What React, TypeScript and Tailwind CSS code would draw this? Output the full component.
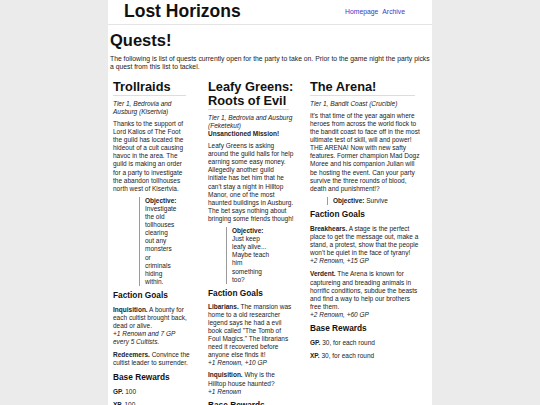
import React from "react";

const Heading = ({ children }: { children: React.ReactNode }) => (
  <h2 className="mr-[4px] border-b border-[#dddddd] pb-[1px] text-[12.8px] font-bold leading-[14px] text-[#111]">
    {children}
  </h2>
);

const SubHeading = ({ children }: { children: React.ReactNode }) => (
  <h3 className="mt-[5.5px] text-[8.3px] font-bold leading-[9.5px] text-[#111]">
    {children}
  </h3>
);

const P = ({ children, loose }: { children: React.ReactNode; loose?: boolean }) => (
  <p className={loose ? "mt-[5px]" : "mt-[4px]"}>{children}</p>
);

// joins pre-broken lines so each column wraps the same way at every zoom
const Lines = ({ lines }: { lines: string[] }) => (
  <>
    {lines.map((l, i) => (
      <React.Fragment key={i}>
        {i > 0 && <br />}
        {l}
      </React.Fragment>
    ))}
  </>
);

const Objective = ({
  className,
  children,
}: {
  className: string;
  children: React.ReactNode;
}) => (
  <blockquote className={"mt-[4px] border-l border-[#9a9a9a] pl-[5px] " + className}>
    <b>Objective:</b>
    {children}
  </blockquote>
);

const App = () => {
  return (
    <div className="min-h-screen bg-[#ebebeb] font-['Liberation_Sans',Arial,sans-serif] text-[#222]">
      <div className="mx-auto min-h-screen w-[324px] bg-white">
        <header className="flex h-[25px] items-center justify-between border-b border-[#e4e4e4] pl-[16px] pr-[27px]">
          <h1 className="text-[17.5px] font-bold leading-none text-[#111]">Lost Horizons</h1>
          <nav className="flex gap-[4px] text-[6.8px] text-[#3838cc]">
            <a href="#">Homepage</a>
            <a href="#">Archive</a>
          </nav>
        </header>

        <main className="px-[2px]">
          <h1 className="mt-[6px] text-[16.5px] font-bold leading-[19px] text-[#111]">Quests!</h1>
          <p className="mt-[5px] text-[6.8px] leading-[8.4px]">
            The following is list of quests currently open for the party to take on. Prior to the
            game night the party picks a quest from this list to tackel.
          </p>

          <div className="mt-[8px] flex whitespace-nowrap pl-[3px] text-[6.5px] leading-[8.1px]">
            {/* Trollraids */}
            <section className="w-[77px] shrink-0">
              <Heading>Trollraids</Heading>
              <p className="mt-[4px] italic">
                <Lines lines={["Tier 1, Bedrovia and", "Ausburg (Kisertvia)"]} />
              </p>
              <P>
                <Lines
                  lines={[
                    "Thanks to the support of",
                    "Lord Kalios of The Foot",
                    "the guild has located the",
                    "hideout of a cult causing",
                    "havoc in the area. The",
                    "guild is making an order",
                    "for a party to investigate",
                    "the abandon tollhouses",
                    "north west of Kisertvia.",
                  ]}
                />
              </P>
              <Objective className="ml-[26px]">
                <br />
                <Lines
                  lines={[
                    "Investigate",
                    "the old",
                    "tollhouses",
                    "clearing",
                    "out any",
                    "monsters",
                    "or",
                    "criminals",
                    "hiding",
                    "within.",
                  ]}
                />
              </Objective>
              <SubHeading>Faction Goals</SubHeading>
              <P loose>
                <b>Inquisition.</b> A bounty for
                <br />
                each cultist brought back,
                <br />
                dead or alive.
                <br />
                <i>
                  +1 Renown and 7 GP
                  <br />
                  every 5 Cultists.
                </i>
              </P>
              <P loose>
                <b>Redeemers.</b> Convince the
                <br />
                cultist leader to surrender.
              </P>
              <SubHeading>Base Rewards</SubHeading>
              <P loose>
                <b>GP.</b> 100
              </P>
              <P loose>
                <b>XP.</b> 100
              </P>
            </section>

            {/* Leafy Greens */}
            <section className="ml-[18px] w-[84.6px] shrink-0">
              <Heading>
                Leafy Greens:
                <br />
                Roots of Evil
              </Heading>
              <p className="mt-[4px]">
                <i>
                  Tier 1, Bedrovia and Ausburg
                  <br />
                  (Feketekut)
                </i>
                <br />
                <b>Unsanctioned Mission!</b>
              </p>
              <P>
                <Lines
                  lines={[
                    "Leafy Greens is asking",
                    "around the guild halls for help",
                    "earning some easy money.",
                    "Allegedly another guild",
                    "initiate has bet him that he",
                    "can't stay a night in Hilltop",
                    "Manor, one of the most",
                    "haunted buildings in Ausburg.",
                    "The bet says nothing about",
                    "bringing some friends though!",
                  ]}
                />
              </P>
              <Objective className="ml-[18px]">
                <br />
                <Lines
                  lines={["Just keep", "leafy alive...", "Maybe teach", "him", "something", "too?"]}
                />
              </Objective>
              <SubHeading>Faction Goals</SubHeading>
              <P>
                <b>Libarians.</b> The mansion was
                <br />
                <Lines
                  lines={[
                    "home to a old researcher",
                    "legend says he had a evil",
                    'book called "The Tomb of',
                    'Foul Magics." The librarians',
                    "need it recovered before",
                    "anyone else finds it!",
                  ]}
                />
                <br />
                <i>+1 Renown, +10 GP</i>
              </P>
              <P>
                <b>Inquisition.</b> Why is the
                <br />
                Hilltop house haunted?
                <br />
                <i>+1 Renown</i>
              </P>
              <SubHeading>Base Rewards</SubHeading>
              <P loose>
                <b>GP.</b> 100
              </P>
              <P loose>
                <b>XP.</b> 100
              </P>
            </section>

            {/* The Arena */}
            <section className="ml-[17.4px] w-[109.5px] shrink-0">
              <Heading>The Arena!</Heading>
              <p className="mt-[4px] italic">Tier 1, Bandit Coast (Crucible)</p>
              <P>
                <Lines
                  lines={[
                    "It's that time of the year again where",
                    "heroes from across the world flock to",
                    "the bandit coast to face off in the most",
                    "ultimate test of skill, will and power!",
                    "THE ARENA! Now with new safty",
                    "features. Former champion Mad Dogz",
                    "Moree and his companion Julian will",
                    "be hosting the event. Can your party",
                    "survive the three rounds of blood,",
                    "death and punishment!?",
                  ]}
                />
              </P>
              <Objective className="mb-[2px] ml-[17px]"> Survive</Objective>
              <SubHeading>Faction Goals</SubHeading>
              <P loose>
                <b>Breakhears.</b> A stage is the perfect
                <br />
                <Lines
                  lines={[
                    "place to get the message out, make a",
                    "stand, a protest, show that the people",
                    "won't be quiet in the face of tyrany!",
                  ]}
                />
                <br />
                <i>+2 Renown, +15 GP</i>
              </P>
              <P loose>
                <b>Verdent.</b> The Arena is known for
                <br />
                <Lines
                  lines={[
                    "captureing and breading animals in",
                    "horrific conditions, subdue the beasts",
                    "and find a way to help our brothers",
                    "free them.",
                  ]}
                />
                <br />
                <i>+2 Renown, +60 GP</i>
              </P>
              <SubHeading>Base Rewards</SubHeading>
              <P loose>
                <b>GP.</b> 30, for each round
              </P>
              <P loose>
                <b>XP.</b> 30, for each round
              </P>
            </section>
          </div>
        </main>
      </div>
    </div>
  );
};

export default App;
